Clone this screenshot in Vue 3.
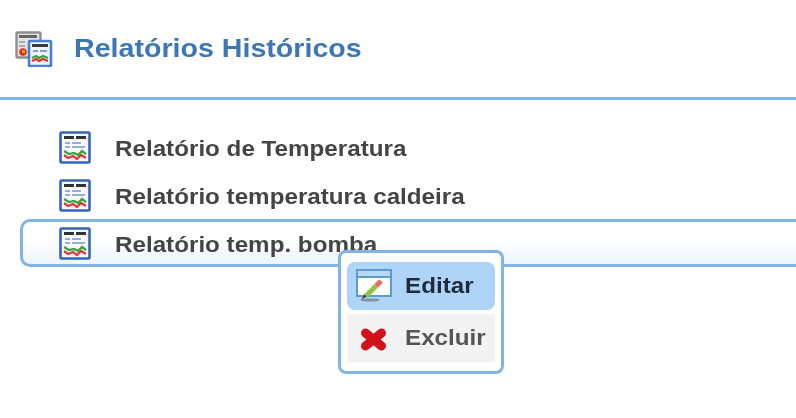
<template>
  <div class="page">
    <header class="header">
      <svg class="header-icon" width="38" height="36" viewBox="0 0 38 36">
        <rect x="1.5" y="1.5" width="24" height="25" rx="1" fill="#e4e4e4" stroke="#8f8f8f" stroke-width="2.4" />
        <rect x="4" y="4" width="18" height="3" fill="#666" />
        <rect x="4" y="10" width="6" height="2" fill="#aaa" />
        <rect x="4" y="14" width="6" height="2" fill="#aaa" />
        <circle cx="8" cy="21" r="3.8" fill="#f0281c" />
        <rect x="7" y="19" width="3" height="3" fill="#f6b21a" />
        <rect x="14" y="10" width="22" height="25" rx="1" fill="#eef3fc" stroke="#4a7ed0" stroke-width="2.6" />
        <rect x="17" y="13" width="16" height="3" fill="#3a3a3a" />
        <rect x="18" y="19" width="5" height="2" fill="#7da0d8" />
        <rect x="25" y="19" width="7" height="2" fill="#7da0d8" />
        <path d="M17 27l4-2 3 2 4-2 5 2" fill="none" stroke="#3ba33b" stroke-width="2.2" />
        <path d="M17 30l4-2 3 2 4-2 5 2" fill="none" stroke="#d33" stroke-width="2.2" />
      </svg>
      <h1 class="title">Relatórios Históricos</h1>
    </header>

    <ul class="list">
      <li
        v-for="(item, i) in relatorios"
        :key="item"
        class="row"
        :class="{ selected: i === 2 }"
      >
        <svg class="row-icon" width="32" height="33" viewBox="0 0 32 33">
          <rect x="1.5" y="1.5" width="29" height="30" rx="1" fill="#f7f9ff" stroke="#3564bd" stroke-width="2.6" />
          <rect x="5" y="5" width="10" height="3" fill="#333" />
          <rect x="17" y="5" width="10" height="3" fill="#333" />
          <rect x="6" y="11" width="5" height="2" fill="#8fb0de" />
          <rect x="13" y="11" width="9" height="2" fill="#8fb0de" />
          <rect x="6" y="15" width="5" height="2" fill="#8fb0de" />
          <rect x="13" y="15" width="13" height="2" fill="#8fb0de" />
          <path d="M5 20l5 3 5-1 4 2 4-4 4 3" fill="none" stroke="#3ba33b" stroke-width="2.2" />
          <path d="M5 24l4 3 5-2 4 3 4-4 5 3" fill="none" stroke="#d63a3a" stroke-width="2.2" />
        </svg>
        <span class="row-label">{{ item }}</span>
      </li>
    </ul>

    <div class="menu">
      <div class="menu-item active">
        <svg width="38" height="34" viewBox="0 0 38 34">
          <rect x="1" y="1" width="34" height="26" fill="#fff" stroke="#5b9bd0" stroke-width="2" />
          <rect x="1" y="1" width="34" height="7" fill="#b9d9f3" stroke="#5b9bd0" stroke-width="2" />
          <ellipse cx="14" cy="31" rx="10" ry="1.6" fill="#666" opacity=".6" />
          <path d="M10 27l10-10" stroke="#8cc63f" stroke-width="5" />
          <path d="M20 17l5-5" stroke="#ee6a5f" stroke-width="5" />
          <path d="M8.500 25l-3 5 5-2z" fill="#444" />
        </svg>
        <span class="menu-label">Editar</span>
      </div>
      <div class="menu-item">
        <svg width="38" height="34" viewBox="0 0 38 34">
          <path d="M9.500 12l16 13M25.500 12L9.500 25" stroke="#d2121a" stroke-width="9" stroke-linecap="round" />
        </svg>
        <span class="menu-label">Excluir</span>
      </div>
    </div>
  </div>
</template>

<script setup>
const relatorios = [
  "Relatório de Temperatura",
  "Relatório temperatura caldeira",
  "Relatório temp. bomba",
]
</script>

<style>
html, body {
  margin: 0;
  background: #fff;
  overflow: hidden;
}
</style>

<style scoped>
.page {
  position: relative;
  width: 796px;
  height: 418px;
  font-family: "Liberation Sans", Arial, sans-serif;
  overflow: hidden;
  filter: blur(0.5px);
}
.header {
  display: flex;
  align-items: center;
  gap: 21px;
  height: 100px;
  padding-left: 15px;
  box-sizing: border-box;
  border-bottom: 3px solid #82b3e6;
}
/* the capture is stretched about 10% wide, so the text is too */
.title,
.row-label,
.menu-label {
  transform: scaleX(1.1);
  transform-origin: left center;
}
.title {
  margin: 0;
  font-size: 26px;
  font-weight: bold;
  color: #3d76b4;
}
.list {
  list-style: none;
  margin: 0;
  padding: 23px 0 0 20px;
}
.row {
  display: flex;
  align-items: center;
  gap: 24px;
  height: 48px;
  padding-left: 39px;
  box-sizing: border-box;
  border: 3px solid transparent;
  border-right: none;
  border-radius: 10px 0 0 10px;
}
.row.selected {
  border-color: #82b3e6;
  background: linear-gradient(#fff 40%, #eef4fd);
}
.row-icon {
  flex: none;
  margin-left: -3px;
}
.row-label {
  padding-top: 4px;
  font-size: 22px;
  font-weight: bold;
  color: #444;
}
.menu {
  position: absolute;
  left: 338px;
  top: 250px;
  width: 166px;
  height: 124px;
  box-sizing: border-box;
  padding: 9px 6px;
  display: flex;
  flex-direction: column;
  gap: 4px;
  background: #fff;
  border: 3px solid #82b3e6;
  border-radius: 8px;
}
.menu-item {
  display: flex;
  align-items: center;
  gap: 11px;
  height: 48px;
  padding-left: 9px;
  font-size: 22px;
  font-weight: bold;
  color: #555;
  background: #f2f2f2;
}
.menu-item.active {
  color: #1f2a3a;
  background: #aed4f8;
  border-radius: 8px;
}
</style>
